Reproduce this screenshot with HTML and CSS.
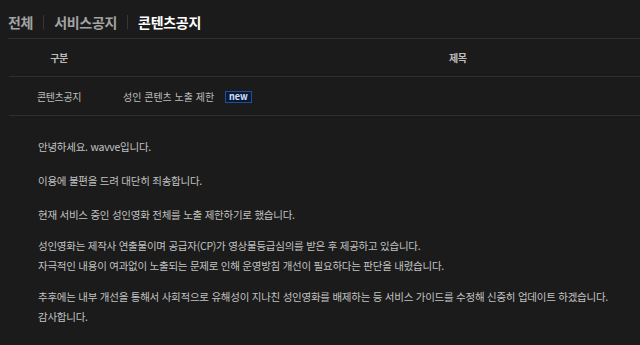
FILE: index.html
```html
<!DOCTYPE html>
<html lang="ko">
<head>
  <meta charset="UTF-8" />
  <meta name="viewport" content="width=device-width, initial-scale=1.0"/>
  <title>공지사항</title>
  <link rel="stylesheet" href="styles.css">
</head>
<body>
  <div class="notice">
    <ul class="tabs">
      <li class="tab">전체</li>
      <li class="tab">서비스공지</li>
      <li class="tab active">콘텐츠공지</li>
    </ul>

    <table class="board">
      <thead>
        <tr><th class="col-cat">구분</th><th class="col-title">제목</th></tr>
      </thead>
      <tbody>
        <tr>
          <td class="col-cat">콘텐츠공지</td>
          <td class="col-title">성인 콘텐츠 노출 제한 <span class="badge">new</span></td>
        </tr>
      </tbody>
    </table>

    <div class="article">
      <p>안녕하세요. wavve입니다.</p>
      <p>이용에 불편을 드려 대단히 죄송합니다.</p>
      <p>현재 서비스 중인 성인영화 전체를 노출 제한하기로 했습니다.</p>
      <p>성인영화는 제작사 연출물이며 공급자(CP)가 영상물등급심의를 받은 후 제공하고 있습니다.<br>
        자극적인 내용이 여과없이 노출되는 문제로 인해 운영방침 개선이 필요하다는 판단을 내렸습니다.</p>
      <p>추후에는 내부 개선을 통해서 사회적으로 유해성이 지나친 성인영화를 배제하는 등 서비스 가이드를 수정해 신중히 업데이트 하겠습니다.<br>
        감사합니다.</p>
    </div>
  </div>
</body>
</html>
```

FILE: styles.css
```css
body { margin: 0; background: #1b1b1b; color: #c2c2c2; font-family: "Noto Sans CJK KR", "Noto Sans", sans-serif; overflow: hidden; }
.notice { padding-left: 9px; }

.tabs { list-style: none; margin: 0 0 0 -1px; padding: 5px 0 0 0; height: 33px; display: flex; align-items: center; border-bottom: 1px solid #2f2f2f; }
.tab { font-size: 14px; font-weight: bold; letter-spacing: -0.3px; color: #a3a3a3; line-height: 20px; }
.tab + .tab { margin-left: 10px; padding-left: 10px; border-left: 1px solid #363636; line-height: 14px; }
.tab.active { color: #fff; }

.board { width: 100%; border-collapse: collapse; font-size: 10px; letter-spacing: -0.4px; }
.board th, .board td { border-bottom: 1px solid #2f2f2f; padding: 0; }
.board th { height: 37px; font-weight: bold; color: #bcbcbc; }
.board td { height: 38px; color: #bdbdbd; }
.col-cat { width: 100px; text-align: center; }
.board th.col-title { text-align: left; padding-left: 340px; }
.board td.col-title { text-align: left; padding-left: 14px; letter-spacing: 0; }
.badge { display: inline-block; margin-left: 8px; padding: 0 3px; border: 1px solid #1f4f9c; background: #0b1a33; color: #cfe0ff; font-size: 9px; font-weight: bold; line-height: 10px; letter-spacing: 0; vertical-align: 1px; }

.article { padding: 21px 0 0 29px; font-size: 10.5px; letter-spacing: -0.25px; line-height: 20px; }
.article p { margin: 0 0 11px 0; }
.article p:nth-child(-n+2) { margin-bottom: 14px; }
```
